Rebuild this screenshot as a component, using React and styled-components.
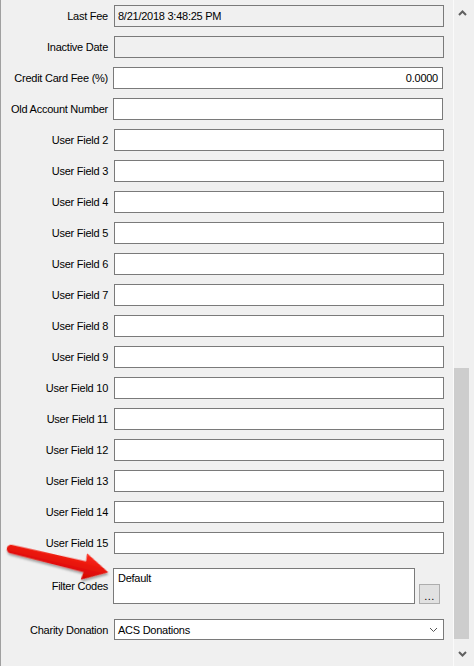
import styled, { createGlobalStyle } from "styled-components";

const Global = createGlobalStyle`
  html, body { margin: 0; padding: 0; background: #f0f0f0; }
  body { font-family: "Liberation Sans", Arial, sans-serif; font-size: 11px; color: #000; letter-spacing: -0.25px; }
`;

const Page = styled.div`
  display: flex;
  width: 474px;
  height: 666px;
  overflow: hidden;
  position: relative;
  background: #f0f0f0;
`;

const Form = styled.div`
  width: 453px;
  border-left: 1px solid #a0a0a0;
  padding-top: 5px;
  display: flex;
  flex-direction: column;
  gap: 9px;
`;

const Row = styled.div`
  display: flex;
  align-items: center;
  height: ${p => p.h || 22}px;
  margin-top: ${p => p.mt || 0}px;
`;

const Label = styled.div`
  width: 107px;
  padding-right: ${p => p.pr ?? 6}px;
  text-align: right;
  white-space: nowrap;
`;

const Field = styled.div`
  box-sizing: border-box;
  width: 330px;
  height: 100%;
  border: 1px solid #7a7a7a;
  background: ${p => (p.disabled ? "#f0f0f0" : "#fff")};
  display: flex;
  align-items: center;
  justify-content: ${p => (p.right ? "flex-end" : "flex-start")};
  padding: 0 4px 0 3px;
`;

const Memo = styled.div`
  box-sizing: border-box;
  width: 302px;
  height: 100%;
  border: 1px solid #7a7a7a;
  background: #fff;
  padding: 3px 4px;
`;

const DotsButton = styled.div`
  box-sizing: border-box;
  width: 21px;
  height: 20px;
  margin-left: 4px;
  align-self: flex-end;
  border: 1px solid #adadad;
  background: #e1e1e1;
  font-size: 11px;
  text-align: center;
  line-height: 22px;
  letter-spacing: 0.5px;
`;

const Combo = styled(Field)`
  justify-content: space-between;
  padding-right: 5px;
`;

const Scrollbar = styled.div`
  width: 20px;
  border-left: 1px solid #fafafa;
  display: flex;
  flex-direction: column;
  align-items: flex-start;
`;

const ArrowBox = styled.div`
  width: 17px;
  height: ${p => p.h}px;
  display: flex;
  justify-content: center;
  align-items: ${p => (p.down ? "flex-end" : "flex-start")};
  padding: ${p => (p.down ? "0 0 9px" : "10px 0 0")};
  box-sizing: border-box;
`;

const Track = styled.div`
  flex: 1;
  width: 17px;
  display: flex;
  flex-direction: column;
  justify-content: flex-end;
`;

const Thumb = styled.div`
  width: 15px;
  height: 271px;
  background: #cdcdcd;
`;

const Annotation = styled.svg`
  position: absolute;
  left: 0;
  top: 530px;
  pointer-events: none;
`;

const fields = [
  { label: "Last Fee", value: "8/21/2018 3:48:25 PM", disabled: true },
  { label: "Inactive Date", disabled: true },
  { label: "Credit Card Fee (%)", value: "0.0000", right: true, pr: 5 },
  { label: "Old Account Number", pr: 5 },
  ...Array.from({ length: 14 }, (_, i) => ({ label: `User Field ${i + 2}` })),
];

function Chevron({ down, thin }) {
  return (
    <svg width="9" height="6" viewBox="0 0 9 6">
      <polyline
        points={down ? "1,1 4.5,4.5 8,1" : "1,5 4.5,1.5 8,5"}
        fill="none"
        stroke={thin ? "#555" : "#606060"}
        strokeWidth={thin ? 1 : 2}
      />
    </svg>
  );
}

export default function App() {
  return (
    <>
      <Global />
      <Page>
        <Form>
          {fields.map(f => (
            <Row key={f.label}>
              <Label pr={f.pr}>{f.label}</Label>
              <Field disabled={f.disabled} right={f.right}>{f.value}</Field>
            </Row>
          ))}
          <Row h={36} mt={5}>
            <Label pr={5}>Filter Codes</Label>
            <Memo>Default</Memo>
            <DotsButton>...</DotsButton>
          </Row>
          <Row h={21} mt={6}>
            <Label>Charity Donation</Label>
            <Combo>
              ACS Donations
              <Chevron down thin />
            </Combo>
          </Row>
        </Form>
        <Scrollbar>
          <ArrowBox h={20}><Chevron /></ArrowBox>
          <Track>
            <Thumb />
          </Track>
          <ArrowBox h={27} down><Chevron down /></ArrowBox>
        </Scrollbar>
        <Annotation width="120" height="60" viewBox="0 0 120 60">
          <defs>
            <filter id="sh" x="-20%" y="-50%" width="140%" height="200%">
              <feDropShadow dx="1" dy="2" stdDeviation="1.2" floodColor="#000" floodOpacity="0.35" />
            </filter>
            <linearGradient id="rd" x1="0" y1="0" x2="0" y2="1">
              <stop offset="0" stopColor="#ff2a1a" />
              <stop offset="1" stopColor="#d10000" />
            </linearGradient>
          </defs>
          <g transform="translate(11,19) rotate(13.5)" filter="url(#sh)">
            <path
              d="M0,-4.2 L76,-5.5 L75,-13.5 L100,0 L75,13.5 L76,5.5 L0,4.2 A4.2,4.2 0 0 1 0,-4.2 Z"
              fill="url(#rd)"
            />
          </g>
        </Annotation>
      </Page>
    </>
  );
}
